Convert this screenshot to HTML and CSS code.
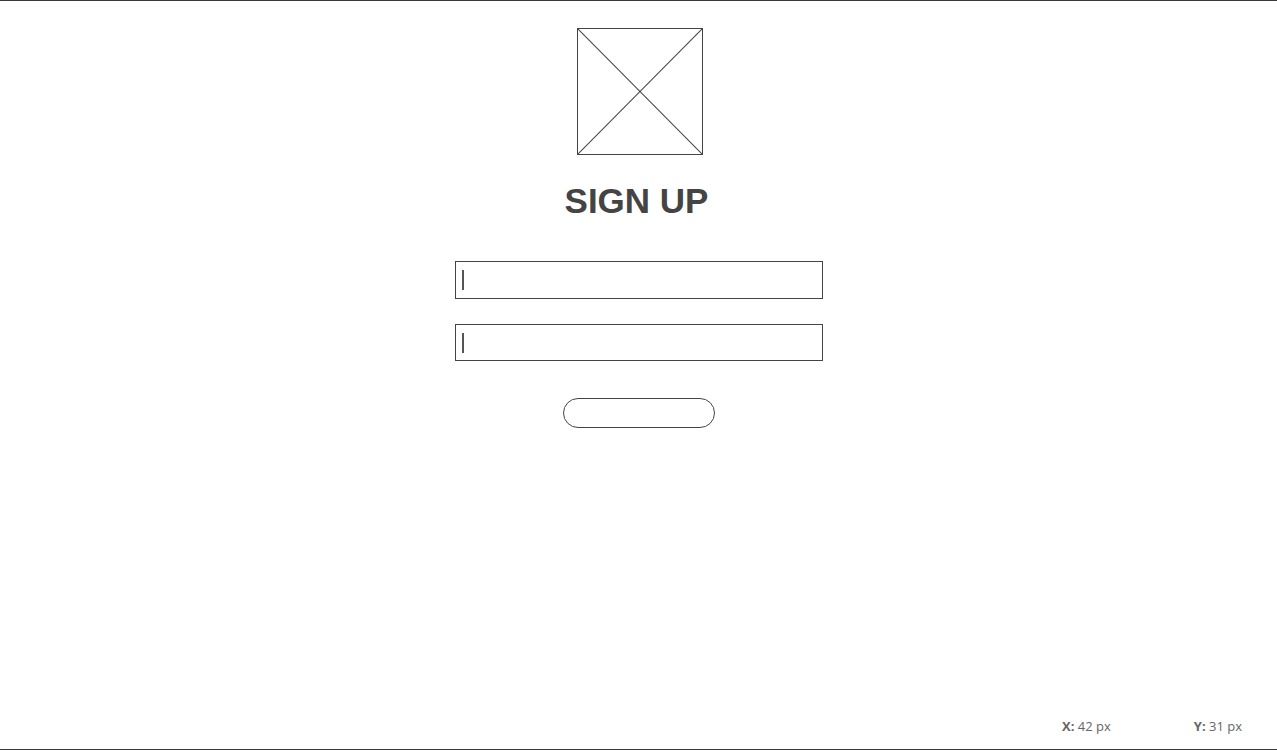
FILE: index.html
```html
<!DOCTYPE html>
<html>
<head>
<meta charset="utf-8">
<link rel="stylesheet" href="styles.css">
</head>
<body>
<div class="frame">
  <main class="form">
    <div class="logo">
      <svg width="124" height="124" viewBox="0 0 124 124" preserveAspectRatio="none">
        <line x1="0" y1="0" x2="124" y2="124" stroke="#444" stroke-width="1"/>
        <line x1="124" y1="0" x2="0" y2="124" stroke="#444" stroke-width="1"/>
      </svg>
    </div>
    <h1 class="title">SIGN UP</h1>
    <div class="field"><span class="caret"></span></div>
    <div class="field field-second"><span class="caret"></span></div>
    <div class="button"></div>
  </main>
  <footer class="coords">
    <span class="coord"><b>X:</b> 42 px</span>
    <span class="coord"><b>Y:</b> 31 px</span>
  </footer>
</div>
</body>
</html>
```
FILE: styles.css
```css
html, body {
  margin: 0;
  padding: 0;
  background: #fff;
}
.frame {
  box-sizing: border-box;
  width: 1277px;
  height: 750px;
  border-top: 1px solid #3a3a3a;
  border-bottom: 1px solid #3a3a3a;
  display: flex;
  flex-direction: column;
  font-family: "Liberation Sans", Arial, sans-serif;
}
.form {
  display: flex;
  flex-direction: column;
  align-items: center;
}
.logo {
  box-sizing: border-box;
  width: 126px;
  height: 127px;
  margin-top: 27px;
  margin-left: 3px;
  border: 1px solid #444;
  display: flex;
}
.logo svg {
  width: 124px;
  height: 125px;
  display: block;
}
.title {
  margin: 26px 0 0 -4px;
  font-size: 35px;
  line-height: 40px;
  font-weight: bold;
  color: #444;
}
.field {
  box-sizing: border-box;
  width: 368px;
  height: 38px;
  margin-top: 40px;
  border: 1px solid #444;
  display: flex;
  align-items: center;
  padding-left: 6px;
}
.field-second {
  height: 37px;
  margin-top: 25px;
}
.caret {
  width: 2px;
  height: 20px;
  background: #555;
}
.button {
  box-sizing: border-box;
  width: 152px;
  height: 30px;
  margin-top: 37px;
  border: 1px solid #444;
  border-radius: 15px;
}
.coords {
  margin-top: auto;
  display: flex;
  justify-content: flex-end;
  gap: 83px;
  padding: 0 35px 14px 0;
  font-family: "Open Sans", sans-serif;
  font-size: 13px;
  line-height: 18px;
  color: #666;
}
.coord b {
  font-weight: bold;
}
```
